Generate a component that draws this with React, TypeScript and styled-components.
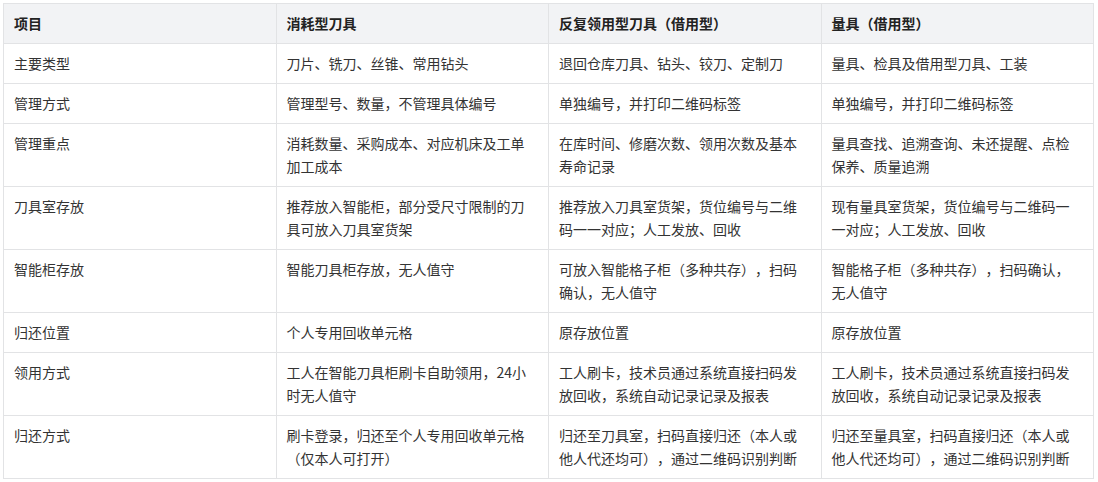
import React from "react";
import styled, { createGlobalStyle } from "styled-components";

const GlobalStyle = createGlobalStyle`
  html, body {
    margin: 0;
    padding: 0;
    background: #ffffff;
  }
  body {
    font-family: "Noto Sans CJK SC", "Noto Sans", sans-serif;
    text-spacing-trim: space-all;
  }
`;

const Page = styled.div`
  padding: 3px 4px 3px 3px;
`;

const Table = styled.table`
  width: 1091px;
  table-layout: fixed;
  border-collapse: collapse;
  font-size: 14px;
  line-height: 23px;
  color: #333333;
  text-spacing-trim: space-all;
`;

const HeadCell = styled.th`
  background: #f2f3f5;
  border: 1px solid #e2e3e5;
  padding: 8px 10px;
  text-align: left;
  font-weight: 700;
  color: #222222;
  vertical-align: top;
`;

const Cell = styled.td`
  border: 1px solid #e2e3e5;
  padding: 8px 10px;
  text-align: left;
  vertical-align: top;
  font-weight: 400;
`;

const headers = ["项目", "消耗型刀具", "反复领用型刀具（借用型）", "量具（借用型）"];

const rows: string[][] = [
  ["主要类型", "刀片、铣刀、丝锥、常用钻头", "退回仓库刀具、钻头、铰刀、定制刀", "量具、检具及借用型刀具、工装"],
  ["管理方式", "管理型号、数量，不管理具体编号", "单独编号，并打印二维码标签", "单独编号，并打印二维码标签"],
  [
    "管理重点",
    "消耗数量、采购成本、对应机床及工单加工成本",
    "在库时间、修磨次数、领用次数及基本寿命记录",
    "量具查找、追溯查询、未还提醒、点检保养、质量追溯",
  ],
  [
    "刀具室存放",
    "推荐放入智能柜，部分受尺寸限制的刀具可放入刀具室货架",
    "推荐放入刀具室货架，货位编号与二维码一一对应；人工发放、回收",
    "现有量具室货架，货位编号与二维码一一对应；人工发放、回收",
  ],
  [
    "智能柜存放",
    "智能刀具柜存放，无人值守",
    "可放入智能格子柜（多种共存），扫码确认，无人值守",
    "智能格子柜（多种共存），扫码确认，无人值守",
  ],
  ["归还位置", "个人专用回收单元格", "原存放位置", "原存放位置"],
  [
    "领用方式",
    "工人在智能刀具柜刷卡自助领用，24小时无人值守",
    "工人刷卡，技术员通过系统直接扫码发放回收，系统自动记录记录及报表",
    "工人刷卡，技术员通过系统直接扫码发放回收，系统自动记录记录及报表",
  ],
  [
    "归还方式",
    "刷卡登录，归还至个人专用回收单元格（仅本人可打开）",
    "归还至刀具室，扫码直接归还（本人或他人代还均可），通过二维码识别判断",
    "归还至量具室，扫码直接归还（本人或他人代还均可），通过二维码识别判断",
  ],
];

export default function App() {
  return (
    <>
      <GlobalStyle />
      <Page>
        <Table>
          <thead>
            <tr>
              {headers.map((h) => (
                <HeadCell key={h}>{h}</HeadCell>
              ))}
            </tr>
          </thead>
          <tbody>
            {rows.map((r) => (
              <tr key={r[0]}>
                {r.map((c, i) => (
                  <Cell key={i}>{c}</Cell>
                ))}
              </tr>
            ))}
          </tbody>
        </Table>
      </Page>
    </>
  );
}
